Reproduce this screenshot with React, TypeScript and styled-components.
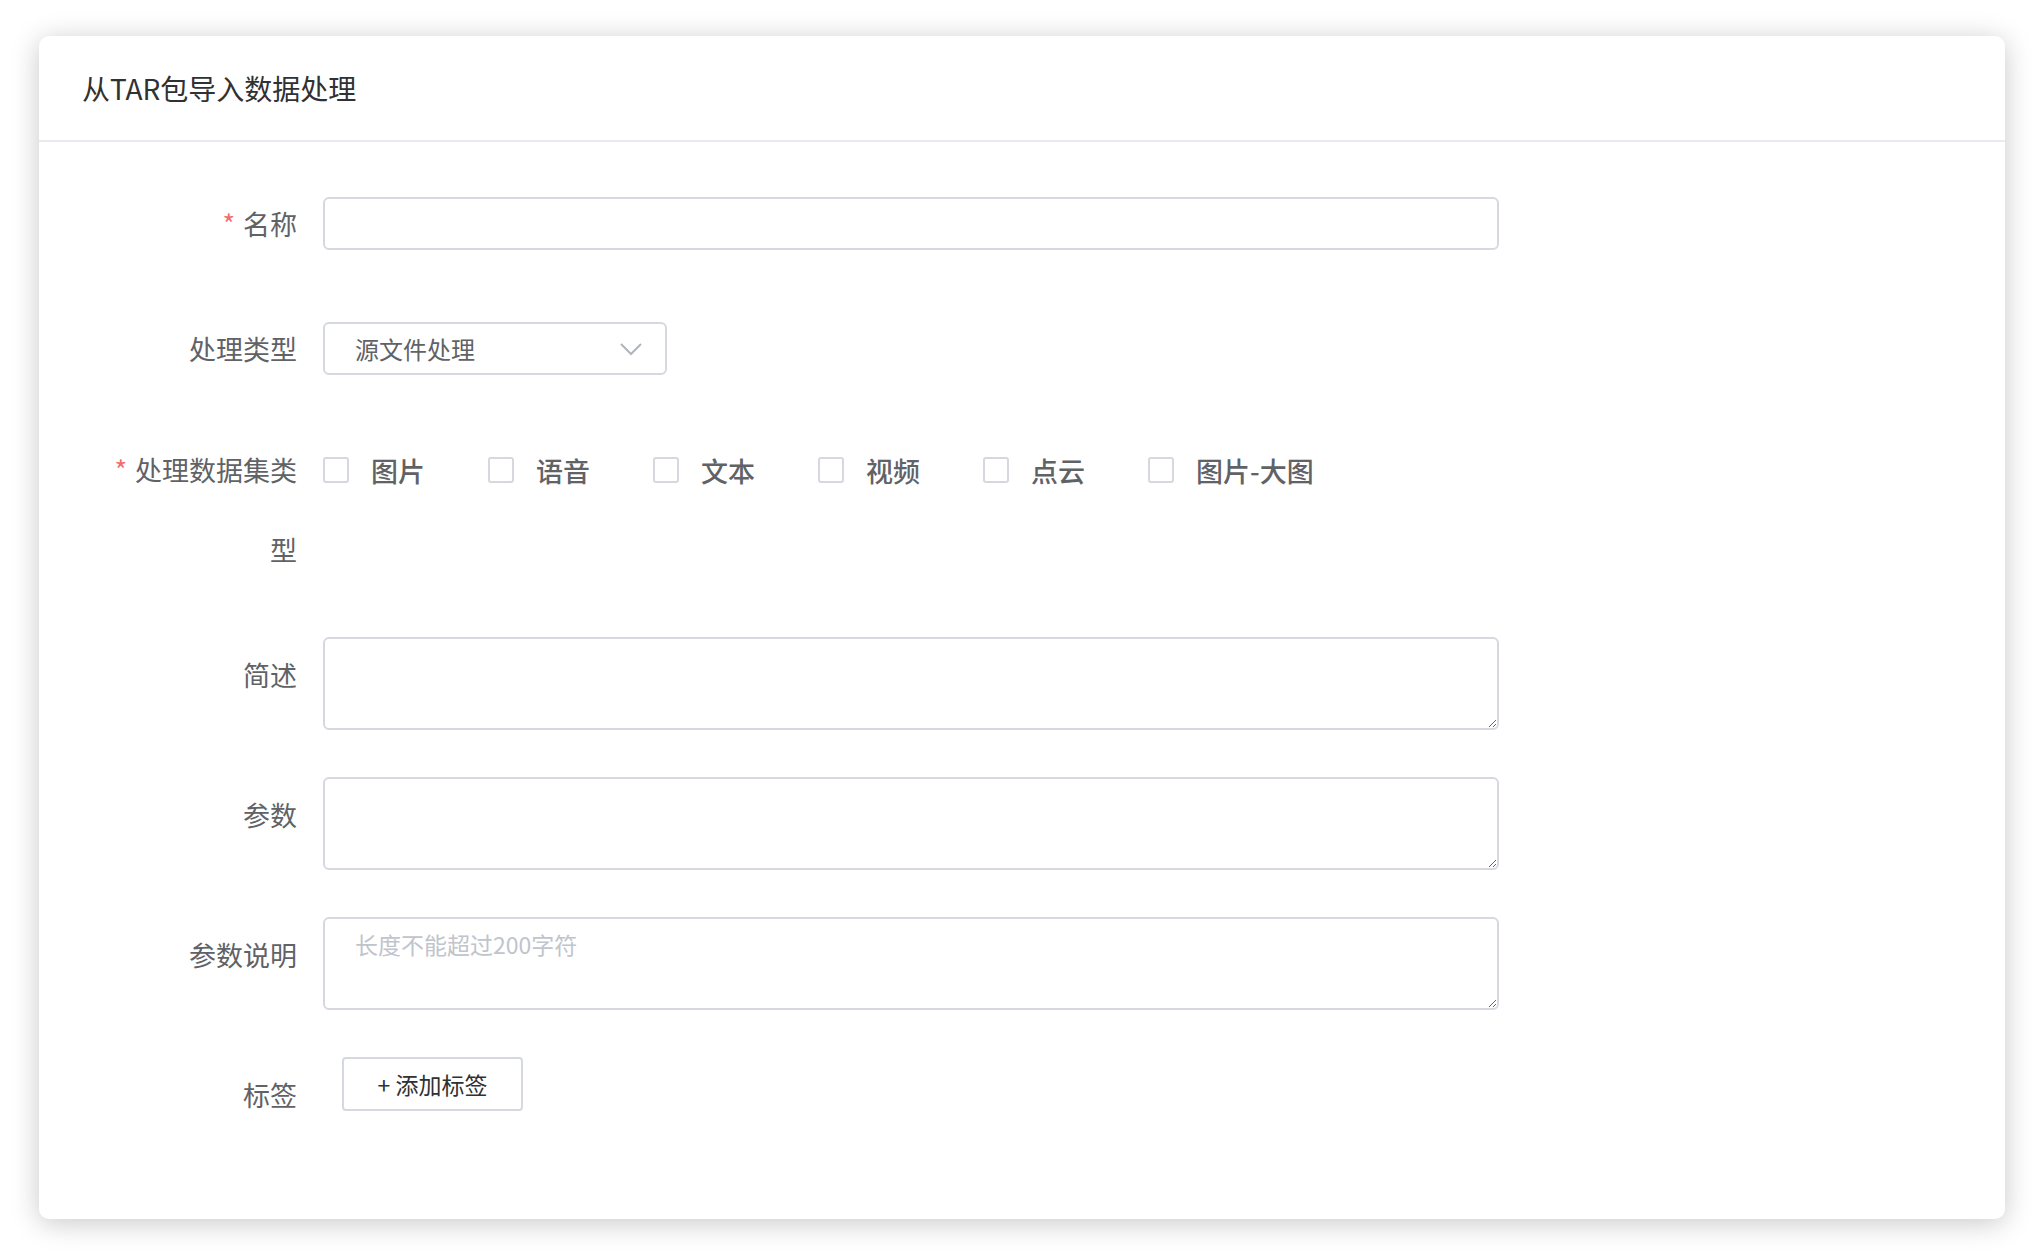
import React from "react";
import styled, { createGlobalStyle } from "styled-components";

const Global = createGlobalStyle`
  html, body { margin: 0; padding: 0; background: #fff; }
  body { font-family: "Noto Sans CJK SC", "Noto Sans", sans-serif; }
  * { box-sizing: border-box; }
`;

const Page = styled.div`
  width: 2042px;
  height: 1254px;
  padding: 36px 37px 0 39px;
`;

const Card = styled.div`
  height: 1183px;
  background: #fff;
  border-radius: 10px;
  box-shadow: 0 4px 28px rgba(0, 0, 0, 0.22);
  display: flex;
  flex-direction: column;
`;

const Header = styled.div`
  height: 106px;
  border-bottom: 2px solid #e8eaef;
  padding: 0 0 0 43px;
  display: flex;
  align-items: center;
  font-size: 28px;
  color: #303133;
`;

const Body = styled.div`
  padding: 55px 0 0 0;
  display: flex;
  flex-direction: column;
`;

const Row = styled.div<{ $mb: number }>`
  display: flex;
  align-items: flex-start;
  margin-bottom: ${(p) => p.$mb}px;
`;

const Label = styled.div<{ $lh: number; $top?: number }>`
  width: 284px;
  padding-right: 26px;
  text-align: right;
  font-size: 27px;
  color: #606266;
  line-height: ${(p) => p.$lh}px;
  padding-top: ${(p) => p.$top || 0}px;
  flex-shrink: 0;
`;

const Star = styled.span`
  color: #f56c6c;
  margin-right: 8px;
`;

const Input = styled.input`
  width: 1176px;
  height: 53px;
  border: 2px solid #d6d8df;
  border-radius: 6px;
  outline: none;
  font-size: 24px;
  padding: 0 30px;
`;

const Select = styled.div`
  width: 344px;
  height: 53px;
  border: 2px solid #d6d8df;
  border-radius: 6px;
  display: flex;
  align-items: center;
  justify-content: space-between;
  padding: 0 22px 0 30px;
  font-size: 24px;
  color: #606266;
`;

const Checks = styled.div`
  display: flex;
  height: 80px;
  align-items: center;
`;

const Check = styled.label`
  display: flex;
  align-items: center;
  margin-right: 63px;
  font-size: 27px;
  font-weight: 500;
  color: #606266;
`;

const Box = styled.span`
  width: 26px;
  height: 26px;
  border: 2px solid #d6d8df;
  border-radius: 3px;
  margin-right: 22px;
  display: inline-block;
`;

const Area = styled.textarea`
  width: 1176px;
  height: 93px;
  border: 2px solid #d6d8df;
  border-radius: 6px;
  outline: none;
  resize: vertical;
  font-family: inherit;
  font-size: 23px;
  padding: 8px 30px;
  display: block;
  &::placeholder { color: #c0c4cc; }
`;

const TagButton = styled.button`
  margin-left: 19px;
  width: 181px;
  height: 54px;
  border: 2px solid #d6d8df;
  border-radius: 4px;
  background: #fff;
  font-family: inherit;
  font-size: 23px;
  color: #303133;
`;

const checks = ["图片", "语音", "文本", "视频", "点云", "图片-大图"];

export default function App() {
  return (
    <Page>
      <Global />
      <Card>
        <Header>从TAR包导入数据处理</Header>
        <Body>
          <Row $mb={72}>
            <Label $lh={53}><Star>*</Star>名称</Label>
            <Input />
          </Row>
          <Row $mb={55}>
            <Label $lh={53}>处理类型</Label>
            <Select>
              <span>源文件处理</span>
              <svg width="24" height="14" viewBox="0 0 24 14">
                <path d="M2 2 L12 12 L22 2" fill="none" stroke="#b0b4bc" strokeWidth="2" />
              </svg>
            </Select>
          </Row>
          <Row $mb={47}>
            <Label $lh={80}><Star>*</Star>处理数据集类<br />型</Label>
            <Checks>
              {checks.map((c) => (
                <Check key={c}><Box />{c}</Check>
              ))}
            </Checks>
          </Row>
          <Row $mb={47}>
            <Label $lh={53} $top={11}>简述</Label>
            <Area />
          </Row>
          <Row $mb={47}>
            <Label $lh={53} $top={11}>参数</Label>
            <Area />
          </Row>
          <Row $mb={47}>
            <Label $lh={53} $top={11}>参数说明</Label>
            <Area placeholder="长度不能超过200字符" />
          </Row>
          <Row $mb={0}>
            <Label $lh={53} $top={11}>标签</Label>
            <TagButton>+ 添加标签</TagButton>
          </Row>
        </Body>
      </Card>
    </Page>
  );
}
